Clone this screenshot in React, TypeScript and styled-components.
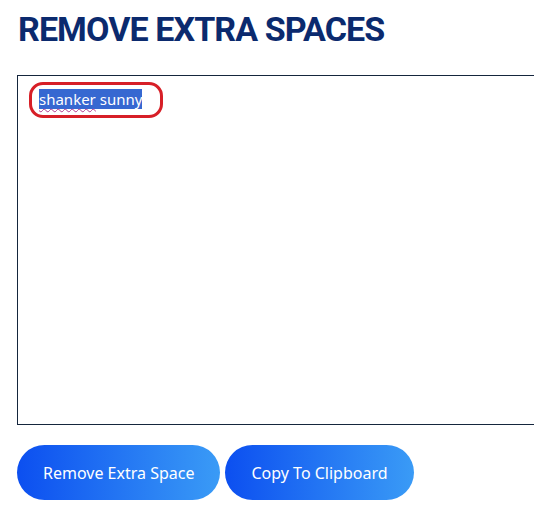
import styled, { createGlobalStyle } from 'styled-components';

const GlobalStyle = createGlobalStyle`
	html, body {
		margin: 0;
		padding: 0;
		background: #ffffff;
		overflow: hidden;
	}
`;

const Page = styled.div`
	padding: 14px 0 0 17px;
	font-family: 'Noto Sans', 'Liberation Sans', sans-serif;
`;

const Heading = styled.h1`
	margin: 0 0 0 1px;
	font-family: Roboto, 'Liberation Sans', sans-serif;
	font-weight: 700;
	font-size: 34px;
	line-height: 30px;
	letter-spacing: -0.9px;
	color: #0b2a6e;
	text-transform: uppercase;
`;

const Editor = styled.div`
	position: relative;
	box-sizing: border-box;
	margin-top: 31px;
	width: 540px;
	height: 350px;
	border: 1px solid #15263d;
	padding: 14px 21px;
	font-size: 15px;
	line-height: 19px;
	color: #333;
`;

const Selected = styled.span<{ $squiggle?: boolean }>`
	background: #3668d1;
	color: #ffffff;
	text-decoration: ${({ $squiggle }) => ($squiggle ? 'underline wavy #b0388a' : 'none')};
	text-decoration-thickness: 1px;
	text-underline-offset: 3px;
`;

const Marker = styled.div`
	position: absolute;
	left: 11px;
	top: 6px;
	width: 128px;
	height: 30px;
	border: 3px solid #d71f27;
	border-radius: 14px;
	pointer-events: none;
`;

const Actions = styled.div`
	display: flex;
	gap: 5px;
	margin-top: 20px;
`;

const Button = styled.button`
	height: 55px;
	padding: 0 26px;
	border: none;
	border-radius: 28px;
	background: linear-gradient(90deg, #0c4ff0 0%, #3a9bf6 100%);
	color: #ffffff;
	font-family: 'Noto Sans', 'Liberation Sans', sans-serif;
	font-size: 16px;
	cursor: pointer;
`;

export default function App() {
	return (
		<Page>
			<GlobalStyle />
			<Heading>Remove Extra Spaces</Heading>
			<Editor>
				<Selected $squiggle>shanker</Selected>
				<Selected> sunny</Selected>
				<Marker />
			</Editor>
			<Actions>
				<Button>Remove Extra Space</Button>
				<Button>Copy To Clipboard</Button>
			</Actions>
		</Page>
	);
}
